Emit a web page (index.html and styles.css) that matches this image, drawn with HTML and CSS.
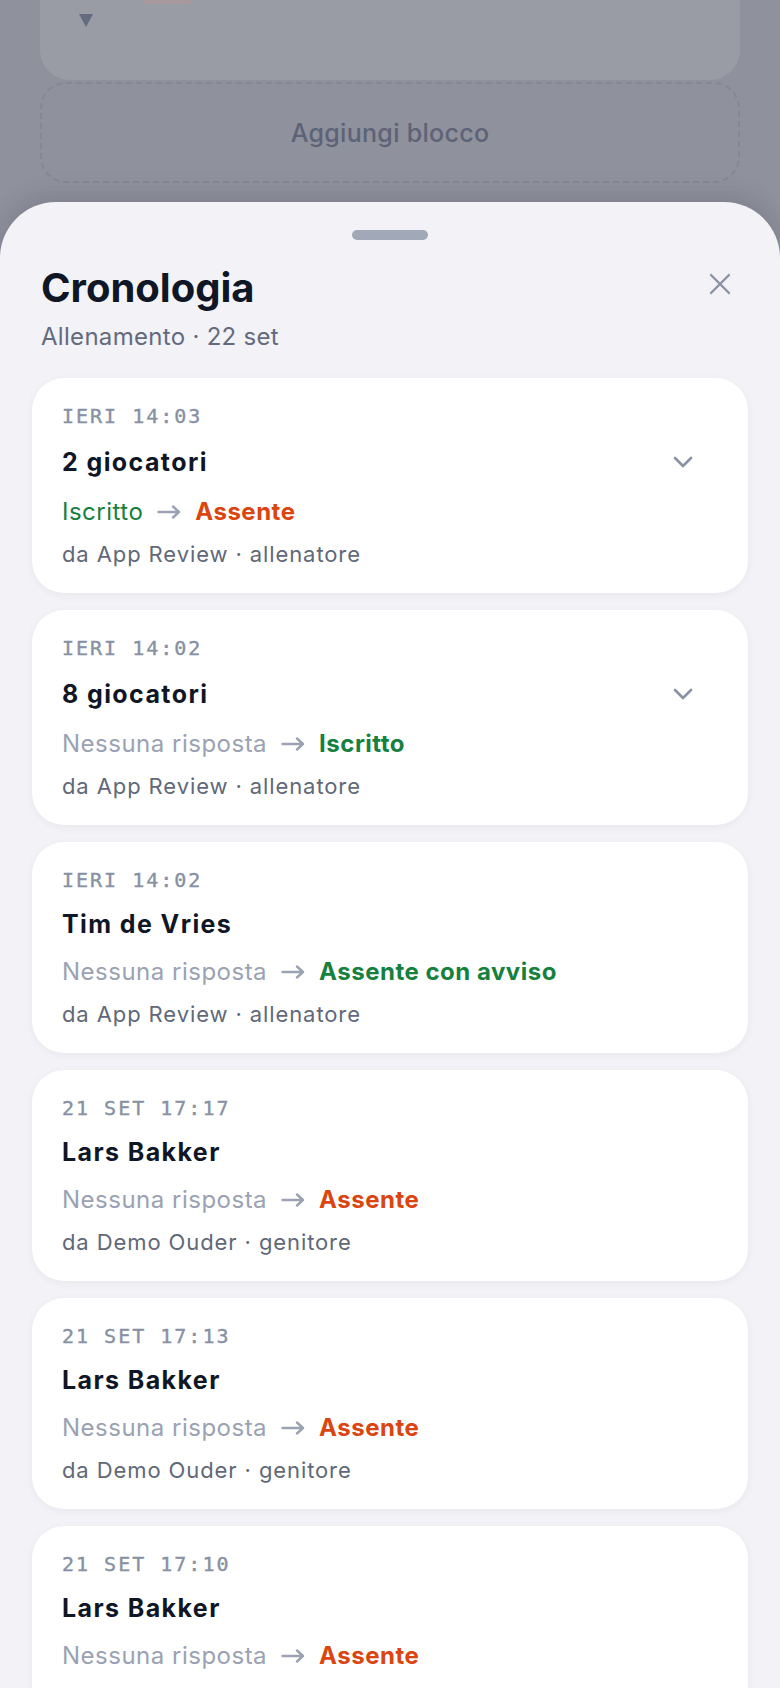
FILE: index.html
```html
<!DOCTYPE html>
<html lang="it">
<head>
  <meta charset="UTF-8">
  <meta name="viewport" content="width=device-width, initial-scale=1.0">
  <title>Cronologia</title>
  <link rel="stylesheet" href="styles.css">
</head>
<body>
  <div class="backdrop">
    <div class="block">
      <span class="badge"></span>
      <svg class="caret" width="14" height="14" viewBox="0 0 14 14"><polygon points="0,1 14,1 7,14" fill="currentColor"/></svg>
    </div>
    <div class="add-block">Aggiungi blocco</div>
  </div>

  <section class="sheet">
    <div class="handle"></div>
    <header class="sheet-head">
      <div>
        <h1>Cronologia</h1>
        <p class="sub">Allenamento · 22 set</p>
      </div>
      <button class="close" aria-label="Chiudi">
        <svg width="22" height="22" viewBox="0 0 22 22"><path d="M2 2 L20 20 M20 2 L2 20" stroke="currentColor" stroke-width="2.4" stroke-linecap="round" fill="none"/></svg>
      </button>
    </header>

    <ul class="log">
      <li class="entry">
        <div class="when">IERI 14:03</div>
        <div class="who">
          <span>2 giocatori</span>
          <button class="toggle" aria-label="Espandi">
            <svg width="20" height="12" viewBox="0 0 20 12"><polyline points="2,2 10,10 18,2" stroke="currentColor" stroke-width="2.6" stroke-linecap="round" stroke-linejoin="round" fill="none"/></svg>
          </button>
        </div>
        <div class="change">
          <span class="green">Iscritto</span>
          <svg class="arrow" width="24" height="14" viewBox="0 0 24 14"><path d="M1.5 7 H22 M16 1.5 L22 7 L16 12.5" stroke="currentColor" stroke-width="2.4" stroke-linecap="round" stroke-linejoin="round" fill="none"/></svg>
          <span class="orange strong">Assente</span>
        </div>
        <div class="by">da App Review · allenatore</div>
      </li>

      <li class="entry">
        <div class="when">IERI 14:02</div>
        <div class="who">
          <span>8 giocatori</span>
          <button class="toggle" aria-label="Espandi">
            <svg width="20" height="12" viewBox="0 0 20 12"><polyline points="2,2 10,10 18,2" stroke="currentColor" stroke-width="2.6" stroke-linecap="round" stroke-linejoin="round" fill="none"/></svg>
          </button>
        </div>
        <div class="change">
          <span class="muted">Nessuna risposta</span>
          <svg class="arrow" width="24" height="14" viewBox="0 0 24 14"><path d="M1.5 7 H22 M16 1.5 L22 7 L16 12.5" stroke="currentColor" stroke-width="2.4" stroke-linecap="round" stroke-linejoin="round" fill="none"/></svg>
          <span class="green strong">Iscritto</span>
        </div>
        <div class="by">da App Review · allenatore</div>
      </li>

      <li class="entry">
        <div class="when">IERI 14:02</div>
        <div class="who"><span>Tim de Vries</span></div>
        <div class="change">
          <span class="muted">Nessuna risposta</span>
          <svg class="arrow" width="24" height="14" viewBox="0 0 24 14"><path d="M1.5 7 H22 M16 1.5 L22 7 L16 12.5" stroke="currentColor" stroke-width="2.4" stroke-linecap="round" stroke-linejoin="round" fill="none"/></svg>
          <span class="green strong">Assente con avviso</span>
        </div>
        <div class="by">da App Review · allenatore</div>
      </li>

      <li class="entry">
        <div class="when">21 SET 17:17</div>
        <div class="who"><span>Lars Bakker</span></div>
        <div class="change">
          <span class="muted">Nessuna risposta</span>
          <svg class="arrow" width="24" height="14" viewBox="0 0 24 14"><path d="M1.5 7 H22 M16 1.5 L22 7 L16 12.5" stroke="currentColor" stroke-width="2.4" stroke-linecap="round" stroke-linejoin="round" fill="none"/></svg>
          <span class="orange strong">Assente</span>
        </div>
        <div class="by">da Demo Ouder · genitore</div>
      </li>

      <li class="entry">
        <div class="when">21 SET 17:13</div>
        <div class="who"><span>Lars Bakker</span></div>
        <div class="change">
          <span class="muted">Nessuna risposta</span>
          <svg class="arrow" width="24" height="14" viewBox="0 0 24 14"><path d="M1.5 7 H22 M16 1.5 L22 7 L16 12.5" stroke="currentColor" stroke-width="2.4" stroke-linecap="round" stroke-linejoin="round" fill="none"/></svg>
          <span class="orange strong">Assente</span>
        </div>
        <div class="by">da Demo Ouder · genitore</div>
      </li>

      <li class="entry">
        <div class="when">21 SET 17:10</div>
        <div class="who"><span>Lars Bakker</span></div>
        <div class="change">
          <span class="muted">Nessuna risposta</span>
          <svg class="arrow" width="24" height="14" viewBox="0 0 24 14"><path d="M1.5 7 H22 M16 1.5 L22 7 L16 12.5" stroke="currentColor" stroke-width="2.4" stroke-linecap="round" stroke-linejoin="round" fill="none"/></svg>
          <span class="orange strong">Assente</span>
        </div>
        <div class="by">da Demo Ouder · genitore</div>
      </li>
    </ul>
  </section>
</body>
</html>
```

FILE: styles.css
```css
* {
  margin: 0;
  padding: 0;
  box-sizing: border-box;
}
html, body {
  height: 1688px;
  overflow: hidden;
}
body {
  font-family: Inter, "Noto Sans", sans-serif;
  background-color: #8f919c;
  color: #0f1626;
}

/* page behind the sheet, dimmed */
.backdrop {
  padding: 0 40px;
}
.block {
  height: 80px;
  background-color: #999ba5;
  border-radius: 0 0 30px 30px;
  padding-left: 39px;
}
.badge {
  display: block;
  width: 49px;
  height: 4px;
  margin-left: 64px;
  background-color: #a8979c;
  border-radius: 0 0 8px 8px;
}
.caret {
  display: block;
  margin-top: 9px;
  color: #646b7e;
}
.add-block {
  margin-top: 2px;
  height: 101px;
  border: 2px dashed #858894;
  border-radius: 26px;
  display: flex;
  align-items: center;
  justify-content: center;
  font-size: 25px;
  font-weight: 500;
  letter-spacing: 0.3px;
  color: #5d6377;
}

/* bottom sheet */
.sheet {
  margin-top: 19px;
  min-height: 1600px;
  background-color: #f2f2f7;
  border-radius: 56px 56px 0 0;
  padding-top: 28px;
  box-shadow: 0 -6px 24px rgba(20, 22, 40, 0.14);
}
.handle {
  width: 76px;
  height: 10px;
  margin: 0 auto;
  border-radius: 5px;
  background-color: #a1a9b9;
}
.sheet-head {
  margin-top: 24px;
  padding: 0 38px 0 41px;
  display: flex;
  justify-content: space-between;
  align-items: flex-start;
}
h1 {
  font-size: 40px;
  line-height: 48px;
  font-weight: 700;
  color: #0f1626;
}
.sub {
  margin-top: 10px;
  font-size: 24px;
  line-height: 30px;
  letter-spacing: 0.3px;
  color: #626a7e;
}
.close {
  width: 44px;
  height: 40px;
  border: none;
  background: none;
  color: #8a92a4;
  display: flex;
  align-items: center;
  justify-content: center;
  cursor: pointer;
}

.log {
  list-style: none;
  margin: 26px 32px 0;
  display: flex;
  flex-direction: column;
  gap: 17px;
}
.entry {
  background-color: #fff;
  border-radius: 32px;
  padding: 24px 30px 25px;
  box-shadow: 0 2px 8px rgba(15, 22, 38, 0.05);
}
.when {
  font-family: "DejaVu Sans Mono", "Liberation Mono", monospace;
  font-size: 20px;
  line-height: 28px;
  letter-spacing: 2px;
  color: #8891a4;
  -webkit-text-stroke: 0.4px #8891a4;
}
.who {
  margin-top: 14px;
  display: flex;
  align-items: center;
  justify-content: space-between;
  font-size: 25px;
  line-height: 32px;
  font-weight: 700;
  letter-spacing: 1.4px;
  color: #0f1626;
}
.toggle {
  width: 36px;
  height: 36px;
  margin-right: 17px;
  border: none;
  background: none;
  color: #8a92a4;
  display: flex;
  align-items: center;
  justify-content: center;
  cursor: pointer;
}
.change {
  margin-top: 16px;
  display: flex;
  align-items: center;
  gap: 14px;
  font-size: 24px;
  line-height: 32px;
  letter-spacing: 0.5px;
}
.arrow {
  color: #9aa2b3;
  flex-shrink: 0;
}
.muted {
  color: #9aa2b3;
}
.green {
  color: #16803f;
}
.orange {
  color: #da4510;
}
.strong {
  font-weight: 700;
}
.by {
  margin-top: 12px;
  font-size: 22px;
  line-height: 28px;
  letter-spacing: 0.9px;
  color: #606879;
}
```
